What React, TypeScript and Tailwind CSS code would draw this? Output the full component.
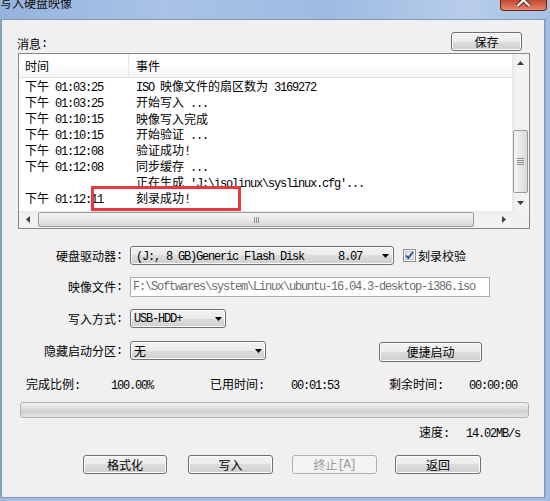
import React from "react";

const CJK = /[\u2e80-\u9fff\uff00-\uffef\u3000-\u303f]/;
const SPLIT = /([\u2e80-\u9fff\uff00-\uffef\u3000-\u303f]+)/;

function T({ s }: { s: string }) {
  const parts = s.split(SPLIT).filter((p) => p !== "");
  return (
    <>
      {parts.map((p, i) =>
        CJK.test(p) ? (
          <span key={i} className="font-['Noto_Sans_CJK_SC',sans-serif] text-[12px]">
            {p}
          </span>
        ) : (
          <span
            key={i}
            className="font-['Liberation_Mono',monospace] text-[12px] tracking-[-1.2px] whitespace-pre"
          >
            {p}
          </span>
        )
      )}
    </>
  );
}

function Tri({ dir, color = "#3c3c3c" }: { dir: "up" | "down" | "left" | "right"; color?: string }) {
  if (dir === "up")
    return (
      <svg width="7" height="4" viewBox="0 0 7 4">
        <polygon points="0,4 7,4 3.5,0" fill={color} />
      </svg>
    );
  if (dir === "down")
    return (
      <svg width="7" height="4" viewBox="0 0 7 4">
        <polygon points="0,0 7,0 3.5,4" fill={color} />
      </svg>
    );
  if (dir === "left")
    return (
      <svg width="4" height="7" viewBox="0 0 4 7">
        <polygon points="4,0 4,7 0,3.5" fill={color} />
      </svg>
    );
  return (
    <svg width="4" height="7" viewBox="0 0 4 7">
      <polygon points="0,0 0,7 4,3.5" fill={color} />
    </svg>
  );
}

const btn =
  "flex items-center justify-center rounded-[3px] border border-[#707070] bg-[linear-gradient(#f2f2f2_0%,#ebebeb_50%,#dddddd_50%,#cfcfcf_100%)] shadow-[inset_0_0_0_1px_#fbfbfb] text-black leading-[16px]";

const rows: [string, string][] = [
  ["下午 01:03:25", "ISO 映像文件的扇区数为 3169272"],
  ["下午 01:03:25", "开始写入 ..."],
  ["下午 01:10:15", "映像写入完成"],
  ["下午 01:10:15", "开始验证 ..."],
  ["下午 01:12:08", "验证成功!"],
  ["下午 01:12:08", "同步缓存 ..."],
  ["", "正在生成 'J:\\isolinux\\syslinux.cfg'..."],
  ["下午 01:12:11", "刻录成功!"],
];

export default function App() {
  return (
    <div className="w-[550px] h-[501px] overflow-hidden flex flex-col bg-[#a7c1e4] text-black">
      {/* title bar */}
      <div className="h-[19px] flex items-start bg-[linear-gradient(to_right,#94b3dd,#a9c3e7_30%,#9dbbe2_60%,#b7cdea_85%,#a6c0e4)]">
        <div className="mt-[-3px] h-[12px] leading-[12px] font-['Noto_Sans_CJK_SC',sans-serif] text-[12px] text-[#111]">
          写入硬盘映像
        </div>
        <div className="ml-auto mr-[3px] w-[47px] h-[11px] rounded-b-[4px] border border-t-0 border-[#6e2518] bg-[linear-gradient(#c24a34,#d3654c_50%,#e48a6e)] overflow-hidden">
          <svg width="45" height="10" viewBox="0 0 45 10">
            <path d="M16.5 -6 L28.5 6 M28.5 -6 L16.5 6" stroke="#5a1c12" strokeWidth="4" />
            <path d="M16.5 -6 L28.5 6 M28.5 -6 L16.5 6" stroke="#ffffff" strokeWidth="2.2" />
          </svg>
        </div>
      </div>

      <div className="flex h-[479px]">
        <div className="w-[1px] bg-[#8aa6cf]" />
        <div className="w-[544px] h-[479px] border border-[#8597b2] bg-[#f0f0f0] flex flex-col">
          {/* message header */}
          <div className="mt-[12px] h-[19px] flex items-start">
            <div className="ml-[15px] mt-[4px] h-[16px] leading-[16px] flex items-center">
              <T s="消息:" />
            </div>
            <div className={`ml-auto mr-[22px] w-[71px] h-[19px] ${btn}`}>
              <T s="保存" />
            </div>
          </div>

          {/* list */}
          <div className="ml-[16px] mt-[2px] w-[512px] h-[176px] border border-[#828790] bg-white relative grid grid-cols-[1fr_17px] grid-rows-[1fr_17px]">
            <div className="flex flex-col overflow-hidden">
              <div className="h-[24px] shrink-0 flex border-b border-[#dfe1e4] bg-[linear-gradient(#ffffff_45%,#f3f4f6_100%)]">
                <div className="w-[110px] pl-[6px] border-r border-[#e6e6e6] flex items-center leading-[16px]">
                  <T s="时间" />
                </div>
                <div className="pl-[7px] flex items-center leading-[16px]">
                  <T s="事件" />
                </div>
              </div>
              {rows.map(([t, e], i) => (
                <div key={i} className="h-[16px] shrink-0 flex items-center leading-[16px] whitespace-nowrap">
                  <div className="w-[117px] pl-[6px] shrink-0">
                    <T s={t} />
                  </div>
                  <div>
                    <T s={e} />
                  </div>
                </div>
              ))}
            </div>
            {/* vertical scrollbar */}
            <div className="flex flex-col bg-[linear-gradient(to_right,#e6e6e6,#f2f2f2_25%,#f2f2f2)]">
              <div className="h-[17px] flex items-center justify-center">
                <Tri dir="up" />
              </div>
              <div className="flex-1 flex flex-col pt-[59px]">
                <div className="ml-[1px] w-[15px] h-[63px] rounded-[2px] border border-[#9a9a9a] bg-[linear-gradient(to_right,#f4f4f4,#e8e8e8_50%,#d9d9d9)] flex flex-col items-center justify-center gap-[1px]">
                  <div className="w-[7px] h-[1px] bg-[#8e8e8e]" />
                  <div className="w-[7px] h-[1px] bg-[#8e8e8e]" />
                  <div className="w-[7px] h-[1px] bg-[#8e8e8e]" />
                  <div className="w-[7px] h-[1px] bg-[#8e8e8e]" />
                </div>
              </div>
              <div className="h-[17px] flex items-center justify-center">
                <Tri dir="down" />
              </div>
            </div>
            {/* horizontal scrollbar */}
            <div className="flex bg-[linear-gradient(#e6e6e6,#f2f2f2_25%,#f2f2f2)]">
              <div className="w-[17px] flex items-center justify-center">
                <Tri dir="left" />
              </div>
              <div className="flex-1 flex items-start pt-[1px]">
                <div className="ml-[2px] w-[436px] h-[15px] rounded-[2px] border border-[#9a9a9a] bg-[linear-gradient(#f4f4f4,#e8e8e8_50%,#d6d6d6)] flex items-center justify-center gap-[1px]">
                  <div className="w-[1px] h-[6px] bg-[#8e8e8e]" />
                  <div className="w-[1px] h-[6px] bg-[#8e8e8e]" />
                  <div className="w-[1px] h-[6px] bg-[#8e8e8e]" />
                </div>
              </div>
              <div className="w-[17px] flex items-center justify-center">
                <Tri dir="right" />
              </div>
            </div>
            <div className="bg-[#f0f0f0]" />
            {/* annotation */}
            <div className="absolute left-[72px] top-[132px] w-[150px] h-[25px] border-[3px] border-[#e8393c]" />
          </div>

          {/* form rows */}
          <div className="mt-[17px] h-[19px] flex items-center">
            <div className="w-[120px] flex justify-end leading-[16px]">
              <T s="硬盘驱动器:" />
            </div>
            <div className={`ml-[8px] w-[264px] h-[19px] !justify-start pl-[5px] pr-[4px] ${btn}`}>
              <div className="w-[202px] whitespace-nowrap">
                <T s="(J:, 8 GB)Generic Flash Disk" />
              </div>
              <div>
                <T s="8.07" />
              </div>
              <div className="ml-auto flex">
                <Tri dir="down" color="#000" />
              </div>
            </div>
            <div className="ml-[9px] w-[13px] h-[13px]">
              <svg width="13" height="13" viewBox="0 0 13 13">
                <rect x="0.5" y="0.5" width="12" height="12" fill="#f4f4f4" stroke="#8e8f8f" />
                <rect x="2.5" y="2.5" width="8" height="8" fill="#e3e7ee" stroke="#c4cad4" />
                <path d="M3 6.5 L5.3 9 L10 3" stroke="#2d4a8f" strokeWidth="1.8" fill="none" />
              </svg>
            </div>
            <div className="ml-[2px] leading-[16px]">
              <T s="刻录校验" />
            </div>
          </div>

          <div className="mt-[12px] h-[20px] flex items-center">
            <div className="w-[120px] flex justify-end leading-[16px]">
              <T s="映像文件:" />
            </div>
            <div className="ml-[8px] w-[360px] h-[20px] border border-[#abadb3] bg-white flex items-center pl-[2px] leading-[16px] text-[#6d6d6d] whitespace-nowrap overflow-hidden">
              <T s="F:\Softwares\system\Linux\ubuntu-16.04.3-desktop-i386.iso" />
            </div>
          </div>

          <div className="mt-[12px] h-[19px] flex items-center">
            <div className="w-[120px] flex justify-end leading-[16px]">
              <T s="写入方式:" />
            </div>
            <div className={`ml-[8px] w-[96px] h-[19px] !justify-start pl-[3px] pr-[3px] ${btn}`}>
              <T s="USB-HDD+" />
              <div className="ml-auto flex">
                <Tri dir="down" color="#000" />
              </div>
            </div>
          </div>

          <div className="mt-[13px] h-[19px] flex items-start">
            <div className="w-[120px] h-[19px] flex items-center justify-end leading-[16px]">
              <T s="隐藏启动分区:" />
            </div>
            <div className={`ml-[8px] w-[136px] h-[19px] !justify-start pl-[3px] pr-[3px] ${btn}`}>
              <T s="无" />
              <div className="ml-auto flex">
                <Tri dir="down" color="#000" />
              </div>
            </div>
            <div className={`ml-[113px] mt-[1px] w-[103px] h-[20px] ${btn}`}>
              <T s="便捷启动" />
            </div>
          </div>

          {/* stats */}
          <div className="mt-[16px] h-[16px] flex items-center pl-[24px] leading-[16px] whitespace-nowrap">
            <div className="w-[85px]">
              <T s="完成比例:" />
            </div>
            <div className="w-[99px]">
              <T s="100.00%" />
            </div>
            <div className="w-[81px]">
              <T s="已用时间:" />
            </div>
            <div className="w-[98px]">
              <T s="00:01:53" />
            </div>
            <div className="w-[80px]">
              <T s="剩余时间:" />
            </div>
            <div>
              <T s="00:00:00" />
            </div>
          </div>

          <div className="mt-[10px] ml-[18px] w-[509px] h-[16px] rounded-[3px] border border-[#b2b2b2] bg-[linear-gradient(#f2f2f2,#e0e0e0_35%,#cfcfcf_55%,#d8d8d8_80%,#e8e8e8)]" />

          <div className="mt-[6px] h-[16px] flex items-center pl-[417px] leading-[16px] whitespace-nowrap">
            <div className="w-[47px]">
              <T s="速度:" />
            </div>
            <div>
              <T s="14.02MB/s" />
            </div>
          </div>

          {/* buttons */}
          <div className="mt-[15px] h-[19px] flex">
            <div className={`ml-[81px] w-[84px] h-[19px] ${btn}`}>
              <T s="格式化" />
            </div>
            <div className={`ml-[21px] w-[85px] h-[19px] ${btn}`}>
              <T s="写入" />
            </div>
            <div className="ml-[19px] w-[85px] h-[19px] flex items-center justify-center rounded-[3px] border border-[#adb2b5] bg-[#f4f4f4] text-[#9a9a9a] leading-[16px]">
              <T s="终止[A]" />
            </div>
            <div className={`ml-[18px] w-[86px] h-[19px] ${btn}`}>
              <T s="返回" />
            </div>
          </div>
        </div>
        <div className="flex-1 bg-[linear-gradient(to_right,#8ea9d0,#a9c3e6_40%,#a3bee3)]" />
      </div>
      <div className="h-[3px] bg-[#a3bde2]" />
    </div>
  );
}
